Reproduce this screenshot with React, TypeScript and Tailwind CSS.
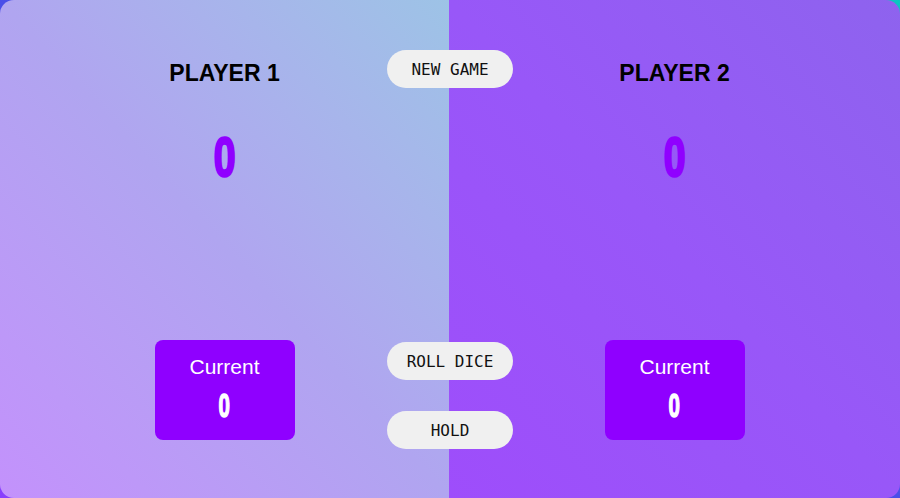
import React from "react";

function Player({ name, panel }: { name: string; panel: string }) {
  return (
    <section className={`flex flex-col items-center font-['Liberation_Sans',Arial,sans-serif] ${panel}`}>
      <h2 className="mt-[59px] text-[23px] leading-[28px] font-bold text-black">{name}</h2>
      <div className="mt-[42px] scale-x-[0.7] text-[56px] leading-[56px] font-bold text-[#9000ff] [-webkit-text-stroke:2.5px_#9000ff]">
        0
      </div>
      <div className="mt-auto mb-[58px] flex h-[100px] w-[140px] flex-col items-center rounded-lg bg-[#8f00ff] text-white">
        <p className="mt-[15px] text-[21px] leading-[24px]">Current</p>
        <p className="mt-[10px] scale-x-[0.62] text-[33px] leading-[33px] font-bold [-webkit-text-stroke:1.5px_#ffffff]">0</p>
      </div>
    </section>
  );
}

function Btn({ label, top }: { label: string; top: string }) {
  return (
    <button
      className={`absolute left-1/2 ${top} h-[38px] w-[126px] -translate-x-1/2 rounded-full bg-[#f0f0f0] pt-[2px] font-['DejaVu_Sans_Mono',monospace] text-[16px] text-[#111]`}
    >
      {label}
    </button>
  );
}

export default function App() {
  return (
    <div className="h-[498px] w-[900px] bg-gradient-to-tr from-[#8a3ffd] via-[#4a4ee8] to-[#09c7c0]">
      <main className="relative grid h-full w-full grid-cols-[449px_451px] overflow-hidden rounded-[14px]">
        <Player name="PLAYER 1" panel="bg-gradient-to-tr from-[#c391fc] via-[#b0a5f0] to-[#9dc3e6]" />
        <Player name="PLAYER 2" panel="bg-gradient-to-tr from-[#9e4dfb] via-[#9857f8] to-[#8e63ee]" />
        <Btn label="NEW GAME" top="top-[50px]" />
        <Btn label="ROLL DICE" top="top-[342px]" />
        <Btn label="HOLD" top="top-[411px]" />
      </main>
    </div>
  );
}
